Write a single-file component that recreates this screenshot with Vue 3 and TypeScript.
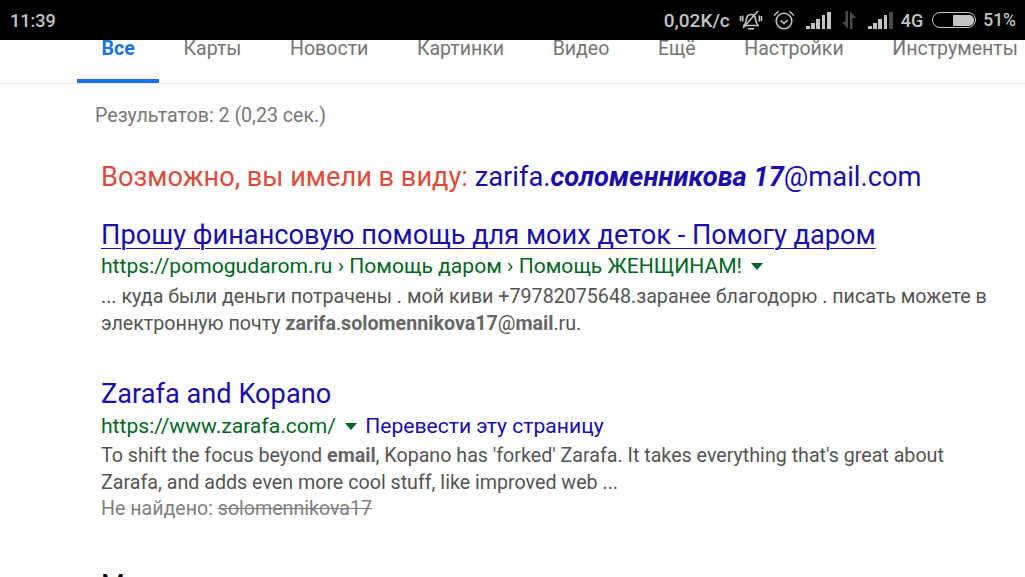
<template>
  <div class="screen">
    <header class="status-bar">
      <span class="clock">11:39</span>
      <div class="status-right">
        <span class="speed">0,02K/c</span>
        <svg class="ic-bell" width="24" height="20" viewBox="0 0 24 20" fill="none" stroke="#c4c4c4" stroke-width="1.600">
          <path d="M5.500 14.500c1.500-1.300 1.500-3.500 2-6 .5-2.500 2-4 4.500-4s4 1.500 4.500 4c.5 2.500 .5 4.700 2 6l.5 1H5z" />
          <path d="M9 18.800h6" />
          <path d="M4 18L19 1" />
          <path d="M1.500 6v5M3.700 5.500v6M22.500 6v5M20.300 5.500v6" />
        </svg>
        <svg class="ic-alarm" width="22" height="20" viewBox="0 0 22 20" fill="none" stroke="#c4c4c4" stroke-width="1.600">
          <circle cx="11" cy="11" r="7.800" />
          <path d="M7.500 10.500l3.500 3 3.800-3.500" />
          <path d="M1 5.500L5.500 1.500M21 5.500L16.500 1.500" />
        </svg>
        <div class="signal">
          <i v-for="h in bars" :key="h" :style="{ height: h + 'px' }"></i>
        </div>
        <svg class="ic-data" width="16" height="18" viewBox="0 0 16 18" fill="#4a4a4a">
          <path d="M7 0v18L1 11h3.500V0zM9 18V0l6 7h-3.500v11z" />
        </svg>
        <div class="signal signal-b">
          <i v-for="h in bars" :key="h" :style="{ height: h + 'px' }"></i>
        </div>
        <span class="net">4G</span>
        <div class="battery"><div class="battery-fill"></div></div>
        <span class="percent">51%</span>
      </div>
    </header>

    <nav class="tabs">
      <a v-for="tab in tabs" :key="tab.label" class="tab" :class="{ active: tab.active }">{{ tab.label }}</a>
    </nav>

    <main class="results">
      <p class="stats">Результатов: 2 (0,23 сек.)</p>
      <h2 class="spell">
        <span class="spell-label">Возможно, вы имели в виду:</span> <a class="spell-link">zarifa.<b><i>соломенникова 17</i></b>@mail.com</a>
      </h2>

      <article class="result first">
        <a class="title underlined">Прошу финансовую помощь для моих деток - Помогу даром</a>
        <div class="url">
          https://pomogudarom.ru › Помощь даром › Помощь ЖЕНЩИНАМ!
          <span class="caret"></span>
        </div>
        <p class="snippet">
          ... куда были деньги потрачены . мой киви +79782075648.заранее благодорю . писать можете в
          электронную почту <b>zarifa</b>.<b>solomennikova17</b>@<b>mail</b>.ru.
        </p>
      </article>

      <article class="result second">
        <a class="title">Zarafa and Kopano</a>
        <div class="url">
          https://www.zarafa.com/
          <span class="caret"></span>
          <a class="translate">Перевести эту страницу</a>
        </div>
        <p class="snippet">
          To shift the focus beyond <b>email</b>, Kopano has 'forked' Zarafa. It takes everything that's great about
          Zarafa, and adds even more cool stuff, like improved web ...
        </p>
        <div class="missing">Не найдено: <s>solomennikova17</s></div>
      </article>

      <div class="cut-off">М</div>
    </main>
  </div>
</template>

<script setup lang="ts">
interface Tab {
  label: string;
  active?: boolean;
}

const tabs: Tab[] = [
  { label: 'Все', active: true },
  { label: 'Карты' },
  { label: 'Новости' },
  { label: 'Картинки' },
  { label: 'Видео' },
  { label: 'Ещё' },
  { label: 'Настройки' },
  { label: 'Инструменты' }
];

const bars = [3, 6, 10, 14, 17];
</script>

<style>
html,
body {
  margin: 0;
  background: #fff;
  overflow: hidden;
}
</style>

<style scoped>
.screen {
  width: 1025px;
  height: 577px;
  overflow: hidden;
  font-family: Roboto, "Noto Sans", sans-serif;
  background: #fff;
}

.status-bar {
  height: 40px;
  background: #000;
  color: #c4c4c4;
  display: flex;
  align-items: center;
  justify-content: space-between;
  padding: 0 9px 0 10px;
  font-weight: 500;
  font-size: 18px;
}

.status-right {
  display: flex;
  align-items: center;
}

.speed {
  font-size: 19px;
}

.ic-bell {
  margin-left: 9px;
}

.ic-alarm {
  margin-left: 10px;
}

.signal {
  margin-left: 11px;
  display: flex;
  align-items: flex-end;
  gap: 1.500px;
  height: 17px;
}

.signal i {
  display: block;
  width: 3.800px;
  background: #c4c4c4;
}

.signal-b i:last-child {
  background: #4a4a4a;
}

.ic-data {
  margin-left: 10px;
}

.net {
  margin-left: 8px;
}

.battery {
  margin-left: 9px;
  width: 44px;
  height: 16px;
  box-sizing: border-box;
  border: 1.500px solid #c4c4c4;
  border-radius: 8px;
  padding: 1.500px;
  display: flex;
  justify-content: flex-end;
}

.battery-fill {
  width: 21px;
  background: #c4c4c4;
  border-radius: 1px 5px 5px 1px;
}

.percent {
  margin-left: 7px;
  font-size: 17.500px;
}

.tabs {
  height: 43px;
  display: flex;
  padding-left: 77px;
  border-bottom: 1px solid #e8e8e8;
  box-sizing: content-box;
  white-space: nowrap;
}

.tab {
  box-sizing: border-box;
  flex: none;
  padding: 0 24.300px;
  height: 43px;
  line-height: 17px;
  font-size: 19.550px;
  color: #757575;
}

.tab.active {
  color: #1a73e8;
  font-weight: 700;
  border-bottom: 4px solid #1a73e8;
  padding: 0 24.500px;
}

.results {
  padding: 21px 0 0 101px;
  white-space: nowrap;
}

.stats {
  margin: 0 0 0 -6px;
  font-size: 19.600px;
  line-height: 22px;
  color: #777;
}

.spell {
  margin: 34px 0 0;
  font-size: 27.200px;
  line-height: 32px;
  font-weight: 400;
}

.spell-label {
  color: #dd4b39;
}

.spell-link {
  font-size: 27.300px;
}

.spell-link,
.title,
.translate {
  color: #1a0dab;
}

.title {
  display: block;
  font-size: 27.200px;
  line-height: 32px;
}

.underlined {
  text-decoration: underline;
  text-decoration-thickness: 1px;
  text-underline-offset: 4px;
}

.result.first {
  margin-top: 26px;
}

.result.second {
  margin-top: 40px;
}

.url {
  margin-top: 2px;
  font-size: 21.100px;
  line-height: 26px;
  color: #006621;
}

.result.second .url {
  margin-top: 3px;
}

.caret {
  display: inline-block;
  margin: 0 8px 3px 4px;
  border-left: 6.500px solid transparent;
  border-right: 6.500px solid transparent;
  border-top: 7px solid #006621;
}

.translate {
  font-size: 21.100px;
}

.snippet {
  margin: 3.500px 0 0;
  width: 900px;
  font-size: 19.670px;
  line-height: 27.500px;
  color: #545454;
  white-space: normal;
}

.result.second .snippet {
  margin-top: 3px;
}

.snippet b {
  font-weight: 700;
  color: #666;
}

.missing {
  margin-top: 1px;
  font-size: 19.600px;
  line-height: 22px;
  color: #808080;
}

.cut-off {
  margin-top: 49px;
  font-size: 27.200px;
  line-height: 32px;
  color: #000;
}
</style>
